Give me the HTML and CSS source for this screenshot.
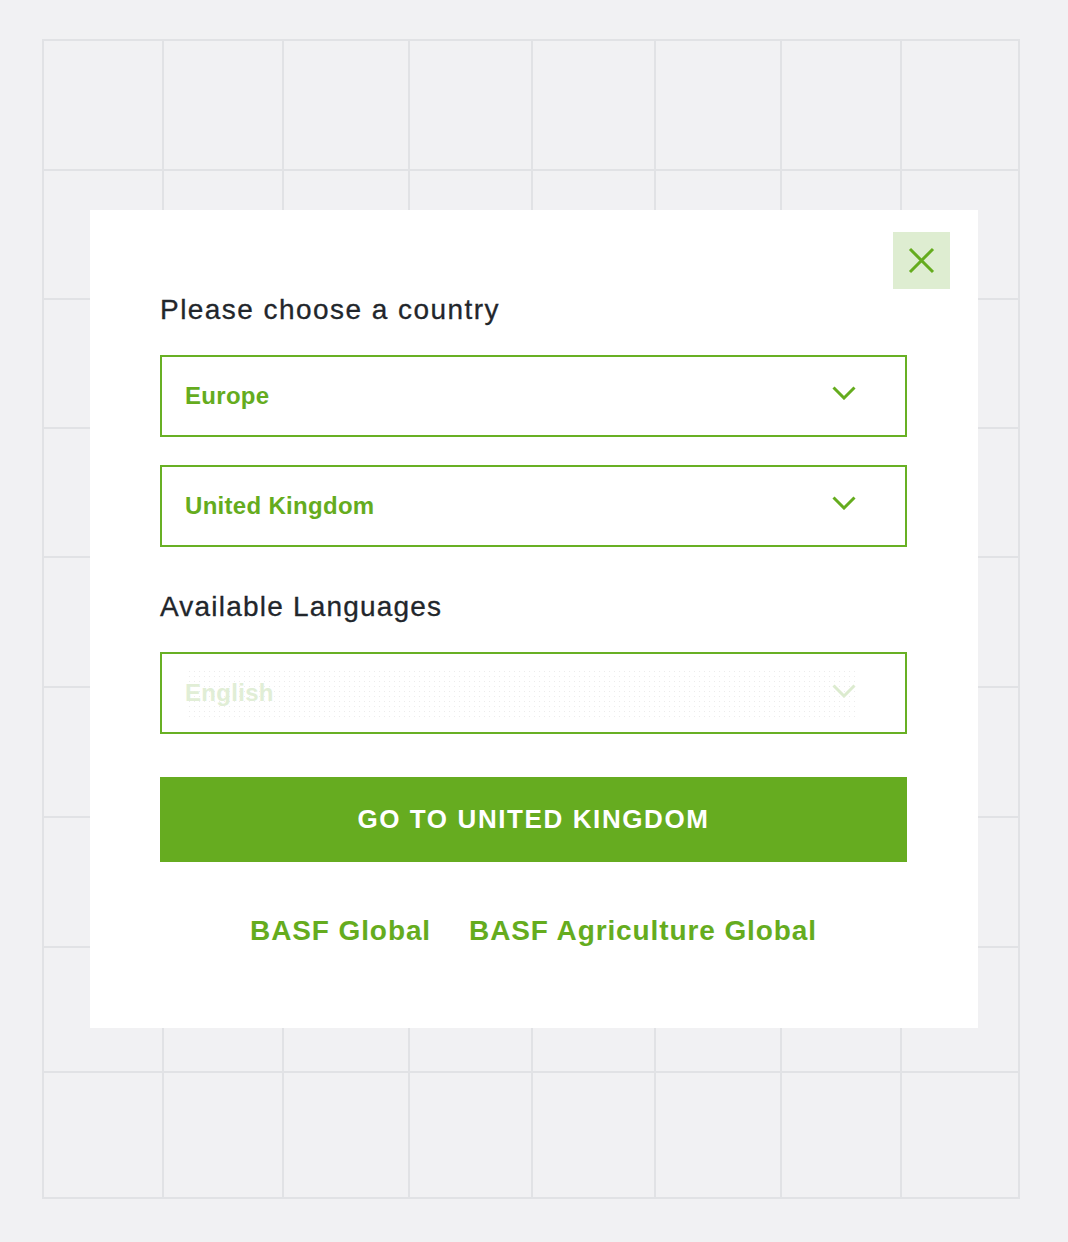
FILE: index.html
```html
<!DOCTYPE html>
<html lang="en">
<head>
<meta charset="utf-8">
<title>Choose a country</title>
<link rel="stylesheet" href="styles.css">
</head>
<body>
<div class="page">
  <div class="grid">
    <div></div><div></div><div></div><div></div><div></div><div></div><div></div><div></div>
    <div></div><div></div><div></div><div></div><div></div><div></div><div></div><div></div>
    <div></div><div></div><div></div><div></div><div></div><div></div><div></div><div></div>
    <div></div><div></div><div></div><div></div><div></div><div></div><div></div><div></div>
    <div></div><div></div><div></div><div></div><div></div><div></div><div></div><div></div>
    <div></div><div></div><div></div><div></div><div></div><div></div><div></div><div></div>
    <div></div><div></div><div></div><div></div><div></div><div></div><div></div><div></div>
    <div></div><div></div><div></div><div></div><div></div><div></div><div></div><div></div>
    <div></div><div></div><div></div><div></div><div></div><div></div><div></div><div></div>
  </div>

  <div class="modal">
    <button class="close" aria-label="Close">
      <svg width="27" height="27" viewBox="0 0 27 27"><path d="M2 2 L25 25 M25 2 L2 25" stroke="#65ac1e" stroke-width="3" fill="none"/></svg>
    </button>

    <h2 class="label first">Please choose a country</h2>
    <div class="field">
      <span class="value">Europe</span>
      <svg class="chev" width="24" height="14" viewBox="0 0 24 14"><path d="M1.5 1.5 L12 12 L22.5 1.5" stroke="#65ac1e" stroke-width="3" fill="none"/></svg>
    </div>
    <div class="field second">
      <span class="value">United Kingdom</span>
      <svg class="chev" width="24" height="14" viewBox="0 0 24 14"><path d="M1.5 1.5 L12 12 L22.5 1.5" stroke="#65ac1e" stroke-width="3" fill="none"/></svg>
    </div>

    <h2 class="label langs">Available Languages</h2>
    <div class="field disabled">
      <span class="value">English</span>
      <svg class="chev" width="24" height="14" viewBox="0 0 24 14"><path d="M1.5 1.5 L12 12 L22.5 1.5" stroke="#dcebcf" stroke-width="3" fill="none"/></svg>
    </div>

    <button class="go">GO TO UNITED KINGDOM</button>

    <div class="links">
      <a href="#">BASF Global</a>
      <a href="#">BASF Agriculture Global</a>
    </div>
  </div>
</div>
</body>
</html>
```

FILE: styles.css
```css
html, body {
  margin: 0;
  padding: 0;
  background: #f1f1f3;
}

body {
  font-family: "Liberation Sans", Arial, sans-serif;
}

.page {
  position: relative;
  width: 1068px;
  height: 1242px;
  padding: 39px 0 0 42px;
  box-sizing: border-box;
}

.grid {
  display: grid;
  grid-template-columns: 118px 118px 124px 121px 121px 124px 118px 116px;
  grid-template-rows: 128px 127px 127px 127px 128px 128px 128px 123px 124px;
  gap: 2px;
  padding: 2px;
  width: 978px;
  box-sizing: border-box;
  background: #e1e2e5;
}

.grid > div {
  background: #f1f1f3;
}

.modal {
  position: absolute;
  left: 90px;
  top: 210px;
  width: 888px;
  height: 818px;
  box-sizing: border-box;
  background: #ffffff;
  padding: 84px 71px 0 70px;
  display: flex;
  flex-direction: column;
}

.close {
  position: absolute;
  top: 22px;
  right: 28px;
  width: 57px;
  height: 57px;
  border: 0;
  padding: 0;
  background: #deedd1;
  display: flex;
  align-items: center;
  justify-content: center;
  cursor: pointer;
}

.label {
  margin: 0;
  font-weight: normal;
  font-size: 28px;
  line-height: 32px;
  letter-spacing: 1.45px;
  color: #22262b;
  -webkit-text-stroke: 0.3px #22262b;
}

.label.first {
  margin-bottom: 29px;
}

.label.langs {
  margin-top: 44px;
  margin-bottom: 29px;
  letter-spacing: 1.2px;
}

.field {
  height: 82px;
  box-sizing: border-box;
  border: 2px solid #68b024;
  display: flex;
  align-items: center;
  justify-content: space-between;
  padding: 0 49px 0 23px;
  background: #ffffff;
}

.field.second {
  margin-top: 28px;
}

.value {
  font-weight: bold;
  font-size: 24px;
  letter-spacing: 0.3px;
  color: #65ac1e;
}

.chev {
  display: block;
  margin-top: -6px;
}

.field.disabled {
  background-image: radial-gradient(circle, #ececec 0.7px, transparent 1px);
  background-size: 5px 5px;
  background-clip: content-box;
  padding-top: 14px;
  padding-bottom: 14px;
  padding-right: 49px;
}

.field.disabled .value {
  color: #e1eed6;
}

.field.disabled .chev {
  margin-top: -4px;
}

.go {
  margin-top: 43px;
  height: 85px;
  border: 0;
  background: #66ac20;
  color: #ffffff;
  font-family: "Liberation Sans", Arial, sans-serif;
  font-weight: bold;
  font-size: 26px;
  letter-spacing: 1.6px;
  cursor: pointer;
}

.links {
  margin-top: 52px;
  display: flex;
  justify-content: center;
  gap: 38px;
}

.links a {
  font-weight: bold;
  font-size: 28px;
  line-height: 34px;
  letter-spacing: 0.9px;
  color: #65ac1e;
  text-decoration: none;
}
```
